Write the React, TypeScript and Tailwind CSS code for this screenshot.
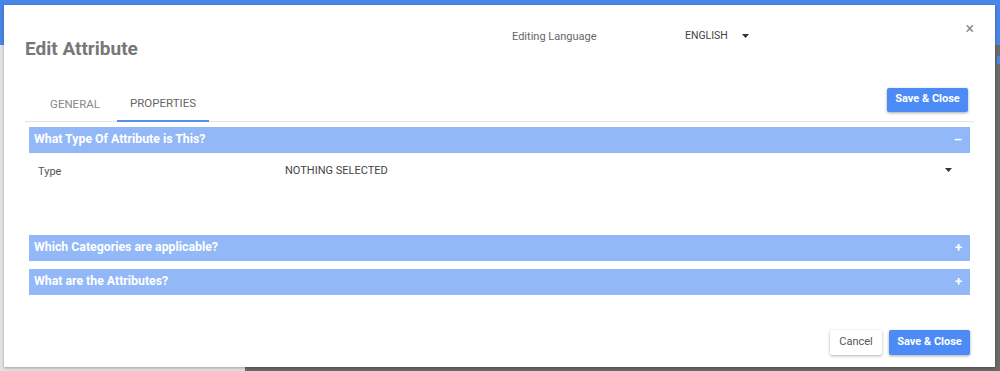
import React from 'react';

const Caret = ({ className = '' }: { className?: string }) => (
  <svg width="7" height="4" viewBox="0 0 7 4" className={className}>
    <path d="M0 0 L7 0 L3.5 4 Z" fill="#333" />
  </svg>
);

const SectionHeader = ({ title, open }: { title: string; open?: boolean }) => (
  <div className="flex items-center justify-between h-[26px] bg-[#92b8f8] pl-[5px] pr-[8px] text-white">
    <span className="text-[12.3px] font-bold">{title}</span>
    <span className="text-[13px] font-bold leading-none">{open ? '–' : '+'}</span>
  </div>
);

export default function App() {
  return (
    <div
      className="relative w-[1000px] h-[371px] overflow-hidden bg-[#e3e3e3]"
      style={{ fontFamily: 'Roboto, "Liberation Sans", sans-serif' }}
    >
      {/* page behind the dialog */}
      <div className="absolute left-0 top-0 w-full h-[45px] bg-[#4a86e8]" />
      <div className="absolute left-[245px] top-[45px] right-0 bottom-0 bg-[#6b6b6b]" />
      <div className="absolute right-0 top-[56px] w-[3px] h-[8px] bg-[#4a86e8]" />

      {/* dialog */}
      <div className="absolute left-[4px] top-[5px] w-[991px] h-[362px] bg-white shadow-[0_1px_3px_rgba(0,0,0,0.3)] flex flex-col">
        <div className="flex items-start pl-[21px]">
          <div className="w-[487px] mt-[30px]">
            <h1 className="text-[19px] font-bold text-[#777]">Edit Attribute</h1>
          </div>
          <span className="w-[173px] mt-[24px] text-[11px] text-[#666]">Editing Language</span>
          <div className="mt-[23px] flex items-center gap-[14px] text-[10.5px] text-[#444]">
            <span>ENGLISH</span>
            <Caret />
          </div>
          <span className="ml-auto mr-[21px] mt-[16px] text-[16px] text-[#888] leading-none">×</span>
        </div>

        <div className="mt-[24px] mx-[21px] flex items-end border-b border-[#e6e6e6]">
          <div className="ml-[8px] w-[84px] text-center text-[11.5px] text-[#888] pb-[7px]">GENERAL</div>
          <div className="w-[92px] text-center text-[11.5px] text-[#666] pb-[7px] border-b-2 border-[#5a8ee8] -mb-px">PROPERTIES</div>
          <button className="ml-auto mb-[9px] mr-[6px] h-[24px] w-[81px] bg-[#4c8bf5] text-white text-[11px] font-bold rounded-[2px] shadow-[0_1px_3px_rgba(0,0,0,0.35)]">
            Save &amp; Close
          </button>
        </div>

        <div className="mt-[5px] ml-[25px] mr-[25px] flex flex-col">
          <SectionHeader title="What Type Of Attribute is This?" open />
          <div className="h-[82px] flex items-start pt-[10px] pl-[9px] pr-[18px]">
            <span className="w-[247px] text-[11px] text-[#555] mt-[1px]">Type</span>
            <span className="text-[11px] text-[#444]">NOTHING SELECTED</span>
            <Caret className="ml-auto mt-[5px]" />
          </div>
          <SectionHeader title="Which Categories are applicable?" />
          <div className="h-[8px]" />
          <SectionHeader title="What are the Attributes?" />
        </div>

        <div className="mt-auto mb-[12px] mr-[25px] flex justify-end gap-[7px]">
          <button className="h-[25px] w-[52px] bg-white text-[#555] text-[11px] rounded-[2px] shadow-[0_1px_3px_rgba(0,0,0,0.3)]">
            Cancel
          </button>
          <button className="h-[25px] w-[81px] bg-[#4c8bf5] text-white text-[11px] font-bold rounded-[2px] shadow-[0_1px_3px_rgba(0,0,0,0.35)]">
            Save &amp; Close
          </button>
        </div>
      </div>
    </div>
  );
}
